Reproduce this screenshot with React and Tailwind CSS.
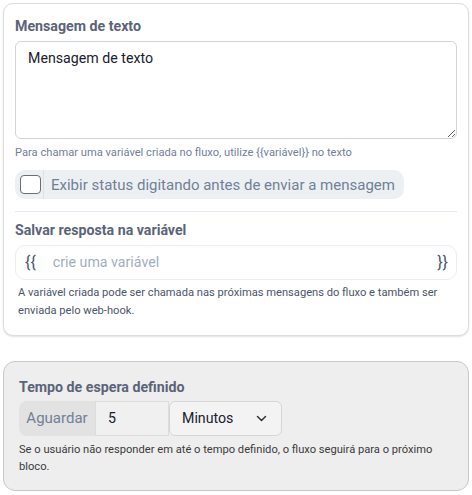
import React from "react";

export default function App() {
  return (
    <div className="w-[472px] h-[495px] bg-white px-[3px] pt-[3px] text-[#1a202c]" style={{ fontFamily: "Roboto, 'Liberation Sans', sans-serif" }}>
      {/* Card 1 */}
      <div className="rounded-[10px] border border-[#dcdcdc] bg-white shadow-[0_1px_2px_rgba(0,0,0,0.12)] px-[11px] pt-[12px] pb-[16px]">
        <div className="text-[14.2px] font-bold leading-[20px] text-[#5a6478]">Mensagem de texto</div>
        <textarea
          className="mt-[5px] block w-full h-[98px] rounded-[6px] border border-[#cfd4da] bg-white px-[12px] pt-[6px] text-[14.2px] leading-[20px] text-[#1a202c] outline-none"
          defaultValue="Mensagem de texto"
        />
        <div className="mt-[6px] text-[11.15px] leading-[16px] text-[#718096]">
          Para chamar uma variável criada no fluxo, utilize {"{{variável}}"} no texto
        </div>
        <div className="mt-[9px] flex h-[29px] w-[389px] items-center rounded-[10px] bg-[#edf0f3]">
          <div className="ml-[5px] h-[19px] w-[21px] shrink-0 rounded-[4px] border-[1.5px] border-[#6e6e6e] bg-white" />
          <div className="ml-[2px] h-full w-px shrink-0 bg-[#dde2e8]" />
          <div className="ml-[7px] whitespace-nowrap text-[15px] leading-[20px] text-[#718096]">Exibir status digitando antes de enviar a mensagem</div>
        </div>
        <div className="mt-[12px] h-px w-full bg-[#e2e8f0]" />
        <div className="mt-[8px] text-[14.2px] font-bold leading-[20px] text-[#5a6478]">Salvar resposta na variável</div>
        <div className="mt-[5px] flex h-[35px] items-center rounded-[10px] border border-[#e8edf3] bg-white pl-[9px] pr-[8px]">
          <span className="text-[16px] text-[#4a5568]">{"{{"}</span>
          <span className="ml-[17px] flex-1 text-[14.2px] text-[#a0aec0]">crie uma variável</span>
          <span className="text-[16px] text-[#4a5568]">{"}}"}</span>
        </div>
        <div className="mt-[4px] pl-[3px] text-[11.15px] leading-[17.5px] text-[#4a5568]">
          A variável criada pode ser chamada nas próximas mensagens do fluxo e também ser enviada pelo web-hook.
        </div>
      </div>

      {/* Card 2 */}
      <div className="mt-[25px] rounded-[12px] border border-[#c8c8c8] bg-[#eeeeee] px-[15px] pt-[15px] pb-[15px]">
        <div className="text-[14.2px] font-bold leading-[20px] text-[#5a6478]">Tempo de espera definido</div>
        <div className="mt-[4px] flex h-[35px] items-stretch">
          <div className="flex w-[76px] items-center justify-center rounded-l-[8px] bg-[#e2e2e2] text-[15px] text-[#718096]">Aguardar</div>
          <div className="flex w-[74px] items-center border border-[#dcdcdc] bg-[#f0f0f0] pl-[12px] text-[14.2px] text-[#1a202c]">5</div>
          <div className="flex w-[113px] items-center justify-between rounded-[6px] border border-[#d6d6d6] bg-[#f3f3f3] pl-[12px] pr-[14px] text-[14.2px] text-[#1a202c]">
            <span>Minutos</span>
            <svg width="11" height="7" viewBox="0 0 11 7" fill="none" stroke="#333" strokeWidth="1.5" strokeLinecap="round" strokeLinejoin="round">
              <path d="M1.5 1.5l4 4 4-4" />
            </svg>
          </div>
        </div>
        <div className="mt-[6px] text-[11.15px] leading-[16.7px] text-[#3a3a3a]">
          Se o usuário não responder em até o tempo definido, o fluxo seguirá para o próximo bloco.
        </div>
      </div>
    </div>
  );
}
